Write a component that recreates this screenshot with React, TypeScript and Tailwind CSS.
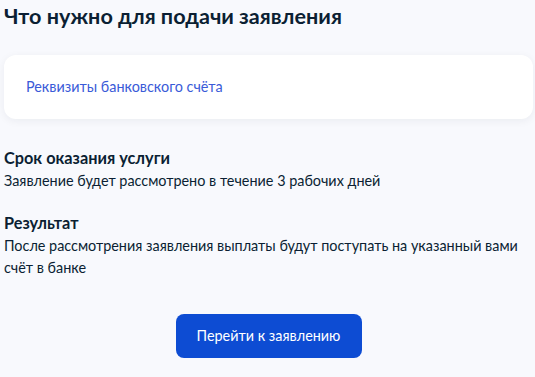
const sections = [
  {
    title: "Срок оказания услуги",
    text: "Заявление будет рассмотрено в течение 3 рабочих дней",
  },
  {
    title: "Результат",
    text: "После рассмотрения заявления выплаты будут поступать на указанный вами счёт в банке",
  },
];

export default function App() {
  return (
    <div className="min-h-[377px] w-[535px] overflow-hidden bg-[#f8f9fd] font-['Lato','Noto_Sans',sans-serif] text-[#0b1f33]">
      <div className="pl-1 pr-[2px]">
        <h2 className="pt-[2px] text-[21.6px] font-bold leading-[28px]">Что нужно для подачи заявления</h2>

        <div className="mt-[25px] flex h-[64px] items-center rounded-[12px] bg-white px-[22px] shadow-[0_2px_8px_rgba(11,31,51,0.06)]">
          <a className="text-[14.4px] leading-5 text-[#3a5bd8]">Реквизиты банковского счёта</a>
        </div>

        <div className="mt-[27px] flex flex-col gap-[19px]">
          {sections.map((s) => (
            <div key={s.title}>
              <h3 className="text-[16.3px] font-bold leading-6">{s.title}</h3>
              <p className="text-[14.4px] leading-[22px]">{s.text}</p>
            </div>
          ))}
        </div>

        <div className="mt-[35px] flex justify-center">
          <button className="h-[44px] w-[186px] rounded-[8px] bg-[#0d4cd3] text-[14.4px] text-white">
            Перейти к заявлению
          </button>
        </div>
      </div>
    </div>
  );
}
